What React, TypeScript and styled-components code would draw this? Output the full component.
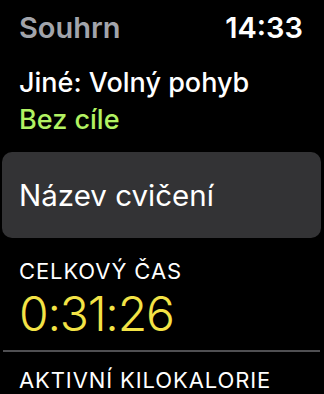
import React from 'react';
import styled, { createGlobalStyle } from 'styled-components';

const GlobalStyle = createGlobalStyle`
  html, body {
    margin: 0;
    padding: 0;
    background: #000;
  }
  body {
    font-family: Inter, "Noto Sans", sans-serif;
    color: #fff;
    -webkit-font-smoothing: antialiased;
  }
`;

const Screen = styled.div`
  width: 324px;
  height: 394px;
  overflow: hidden;
  background: #000;
  padding-top: 11px;
  box-sizing: border-box;
`;

const Header = styled.div`
  display: flex;
  justify-content: space-between;
  align-items: baseline;
  padding: 0 21px 0 19px;
  font-size: 29px;
  line-height: 34px;
  font-weight: 600;
`;

const Title = styled.span`
  color: #a2a4ab;
`;

const Clock = styled.span`
  color: #fff;
`;

const Workout = styled.div`
  padding: 0 19px;
  margin-top: 19px;
`;

const Line = styled.div<{ $color?: string }>`
  font-size: 27px;
  line-height: 37px;
  font-weight: 500;
  color: ${(p) => p.$color || '#fff'};
`;

const NameCard = styled.div`
  margin: 14px 3px 0 2px;
  height: 86px;
  border-radius: 10px;
  background: #333335;
  display: flex;
  align-items: center;
  padding: 0 17px;
  font-size: 29.5px;
  font-weight: 400;
`;

const Metric = styled.div<{ $gap: number }>`
  padding: 0 19px;
  margin-top: ${(p) => p.$gap}px;
`;

const Label = styled.div`
  font-size: 22px;
  line-height: 26px;
  font-weight: 400;
  letter-spacing: 0.9px;
  text-transform: uppercase;
`;

const Value = styled.div`
  margin-top: 3px;
  font-size: 48px;
  line-height: 54px;
  font-weight: 300;
  letter-spacing: -1.2px;
  color: #f3e346;
`;

const Divider = styled.hr`
  border: none;
  height: 2px;
  background: #4f4f52;
  margin: 9px 4px 0 3px;
`;

export default function App() {
  return (
    <Screen>
      <GlobalStyle />
      <Header>
        <Title>Souhrn</Title>
        <Clock>14:33</Clock>
      </Header>
      <Workout>
        <Line>Jiné: Volný pohyb</Line>
        <Line $color="#b2f262">Bez cíle</Line>
      </Workout>
      <NameCard>Název cvičení</NameCard>
      <Metric $gap={20}>
        <Label>Celkový čas</Label>
        <Value>0:31:26</Value>
      </Metric>
      <Divider />
      <Metric $gap={15}>
        <Label>Aktivní kilokalorie</Label>
      </Metric>
    </Screen>
  );
}
